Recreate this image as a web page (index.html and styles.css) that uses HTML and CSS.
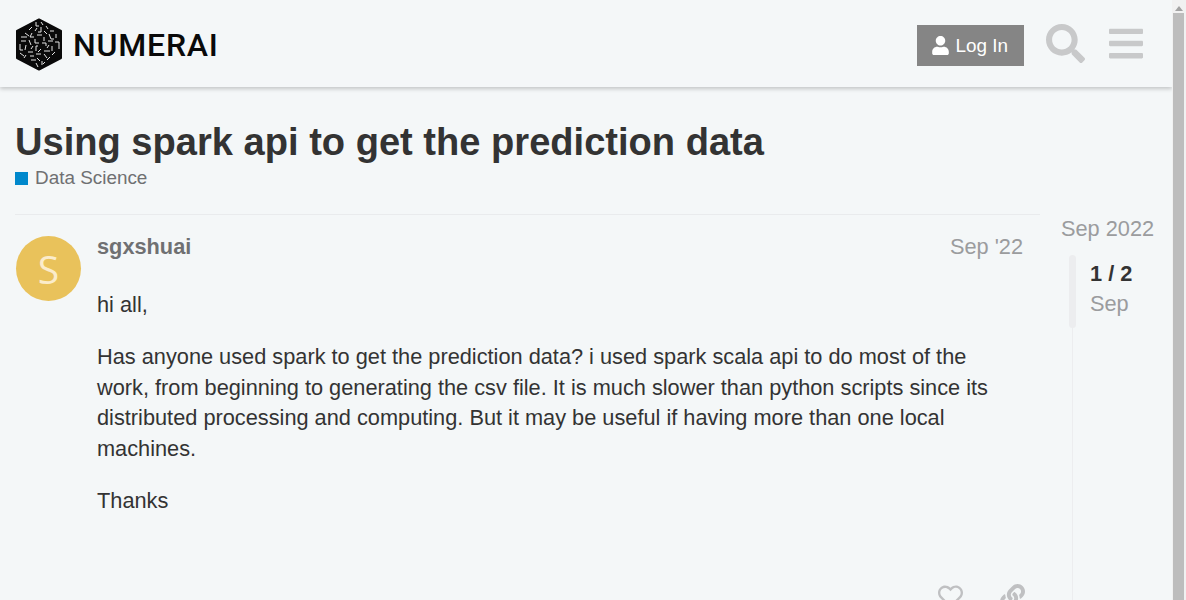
FILE: index.html
```html
<!DOCTYPE html>
<html lang="en">
<head>
    <meta charset="UTF-8">
    <meta name="viewport" content="width=device-width, initial-scale=1.0">
    <title>Using spark api to get the prediction data</title>
    <link rel="stylesheet" href="styles.css">
</head>
<body>
    <div class="page">
        <div class="main">
            <header class="site-header">
                <a class="logo" href="#">
                    <svg class="logo-mark" viewBox="0 0 48 54" width="48" height="54">
                        <polygon points="24,2.500 46,14 46,41 24,52.500 2,41 2,14" fill="#0a0a0a" stroke="#0a0a0a" stroke-linejoin="round" stroke-width="2"/>
                        <path class="logo-bits" d="M21 5v4h3M26 5l2 3M31 9l2 3M17 10l-3 3M22 11l-2 3M26 10v5h-3M35 14h4M29 14l3 3M10 16l4 3M17 16l-2 4h4M22 18h5M34 17l2 5h3M41 17v4M6 20h6M29 20v4M6 24h5M14 23l2 5M20 22v4h4M33 24h5M27 26h4v3M40 25h4v7M5 27v6h3M11 28l-1 5M18 29l-2 3M23 29h-2v5M34 28l-2 3M37 29v5M13 35h5M26 32l-3 3M29 34h6M5 36l4 3M40 35l-3 3M21 37h5M11 38l-2 3M15 39h4M29 37l3 4M35 40l-3 3M22 41l3 3M16 43h5M27 44v4M21 46l2 4M30 45l-2 2"/>
                    </svg>
                    <span class="logo-name">NUMERAI</span>
                </a>
                <div class="header-actions">
                    <button class="login-btn">
                        <svg class="user-icon" viewBox="0 0 448 512"><path d="M224 256c70.7 0 128-57.3 128-128S294.7 0 224 0 96 57.3 96 128s57.3 128 128 128zm89.6 32h-16.7c-22.2 10.2-46.9 16-72.9 16s-50.6-5.8-72.9-16h-16.7C60.2 288 0 348.2 0 422.4V464c0 26.5 21.5 48 48 48h352c26.5 0 48-21.5 48-48v-41.6c0-74.2-60.2-134.4-134.4-134.4z"/></svg>
                        Log In
                    </button>
                    <svg class="header-icon search-icon" viewBox="0 0 512 512"><path d="M505 442.7L405.3 343c-4.5-4.5-10.6-7-17-7H372c27.6-35.3 44-79.7 44-128C416 93.1 322.9 0 208 0S0 93.1 0 208s93.1 208 208 208c48.3 0 92.7-16.4 128-44v16.3c0 6.4 2.5 12.5 7 17l99.7 99.7c9.4 9.4 24.6 9.4 33.9 0l28.3-28.3c9.4-9.4 9.4-24.6.1-34zM208 336c-70.7 0-128-57.2-128-128 0-70.7 57.2-128 128-128 70.7 0 128 57.2 128 128 0 70.7-57.2 128-128 128z"/></svg>
                    <svg class="header-icon bars-icon" viewBox="0 0 448 512"><path d="M16 132h416c8.837 0 16-7.163 16-16V76c0-8.837-7.163-16-16-16H16C7.163 60 0 67.163 0 76v40c0 8.837 7.163 16 16 16zm0 160h416c8.837 0 16-7.163 16-16v-40c0-8.837-7.163-16-16-16H16c-8.837 0-16 7.163-16 16v40c0 8.837 7.163 16 16 16zm0 160h416c8.837 0 16-7.163 16-16v-40c0-8.837-7.163-16-16-16H16c-8.837 0-16 7.163-16 16v40c0 8.837 7.163 16 16 16z"/></svg>
                </div>
            </header>

            <div class="topic-title">
                <h1>Using spark api to get the prediction data</h1>
                <div class="category"><span class="category-box"></span>Data Science</div>
            </div>

            <div class="topic-body">
                <article class="post">
                    <div class="avatar">S</div>
                    <div class="post-main">
                        <div class="post-meta">
                            <span class="username">sgxshuai</span>
                            <span class="post-date">Sep '22</span>
                        </div>
                        <div class="cooked">
                            <p>hi all,</p>
                            <p>Has anyone used spark to get the prediction data? i used spark scala api to do most of the work, from beginning to generating the csv file. It is much slower than python scripts since its distributed processing and computing. But it may be useful if having more than one local machines.</p>
                            <p>Thanks</p>
                        </div>
                        <div class="post-actions">
                            <svg class="action-icon" viewBox="0 0 512 512"><path d="M458.4 64.3C400.6 15.7 311.3 23 256 79.3 200.7 23 111.4 15.6 53.6 64.3-21.6 127.6-10.6 230.8 43 285.5l175.4 178.7c10 10.2 23.4 15.9 37.6 15.9 14.3 0 27.6-5.6 37.6-15.8L469 285.6c53.5-54.7 64.7-157.9-10.6-221.3zm-23.6 187.5L259.4 430.5c-2.4 2.4-4.4 2.4-6.8 0L77.2 251.8c-36.5-37.2-43.9-107.6 7.3-150.7 38.9-32.7 98.9-27.8 136.5 10.5l35 35.7 35-35.7c37.8-38.5 97.8-43.2 136.5-10.6 51.1 43.1 43.5 113.9 7.3 150.8z"/></svg>
                            <svg class="action-icon" viewBox="0 0 512 512"><path d="M326.612 185.391c59.747 59.809 58.927 155.698.36 214.59-.11.12-.24.25-.36.37l-67.2 67.2c-59.27 59.27-155.699 59.262-214.96 0-59.27-59.26-59.27-155.7 0-214.96l37.106-37.106c9.84-9.84 26.786-3.3 27.294 10.606.648 17.722 3.826 35.527 9.69 52.721 1.986 5.822.567 12.262-3.783 16.612l-13.087 13.087c-28.026 28.026-28.905 73.66-1.155 101.96 28.024 28.579 74.086 28.749 102.325.51l67.2-67.19c28.191-28.191 28.073-73.757 0-101.83-3.701-3.694-7.429-6.564-10.341-8.569a16.037 16.037 0 0 1-6.947-12.606c-.396-10.567 3.348-21.456 11.698-29.806l21.054-21.055c5.521-5.521 14.182-6.199 20.584-1.731a152.482 152.482 0 0 1 20.522 17.197zM467.547 44.449c-59.261-59.262-155.69-59.27-214.96 0l-67.2 67.2c-.12.12-.25.25-.36.37-58.566 58.892-59.387 154.781.36 214.59a152.454 152.454 0 0 0 20.521 17.196c6.402 4.468 15.064 3.789 20.584-1.731l21.054-21.055c8.35-8.35 12.094-19.239 11.698-29.806a16.037 16.037 0 0 0-6.947-12.606c-2.912-2.005-6.64-4.875-10.341-8.569-28.073-28.073-28.191-73.639 0-101.83l67.2-67.19c28.239-28.239 74.3-28.069 102.325.51 27.75 28.3 26.872 73.934-1.155 101.96l-13.087 13.087c-4.35 4.35-5.769 10.79-3.783 16.612 5.864 17.194 9.042 34.999 9.69 52.721.509 13.906 17.454 20.446 27.294 10.606l37.106-37.106c59.271-59.259 59.271-155.699.001-214.959z"/></svg>
                        </div>
                    </div>
                </article>

                <aside class="timeline">
                    <div class="timeline-start">Sep 2022</div>
                    <div class="timeline-rail">
                        <div class="timeline-handle"></div>
                        <div class="timeline-info">
                            <div class="timeline-count">1 / 2</div>
                            <div class="timeline-date">Sep</div>
                        </div>
                    </div>
                </aside>
            </div>
        </div>

        <div class="scrollbar">
            <div class="scroll-arrow"></div>
            <div class="scroll-thumb"></div>
        </div>
    </div>
</body>
</html>
```

FILE: styles.css
```css
html, body {
    margin: 0;
    height: 600px;
    overflow: hidden;
}
body {
    background-color: #f4f7f8;
    color: #333;
    font-family: "Liberation Sans", Arial, sans-serif;
}
.page {
    display: flex;
    height: 600px;
}
.main {
    width: 1172px;
    flex: none;
    overflow: hidden;
}

/* header */
.site-header {
    display: flex;
    justify-content: space-between;
    align-items: center;
    height: 87px;
    padding: 0 29px 0 15px;
    box-sizing: border-box;
    box-shadow: 0 2px 4px rgba(0, 0, 0, 0.2);
}
.logo {
    display: flex;
    align-items: center;
    gap: 10px;
    text-decoration: none;
    color: #0a0a0a;
}
.logo-mark {
    display: block;
}
.logo-bits {
    fill: none;
    stroke: #e4e4e4;
    stroke-width: 1;
}
.logo-name {
    margin-top: 2px;
    font-family: Roboto, sans-serif;
    font-weight: 500;
    font-size: 32px;
    letter-spacing: 0.8px;
}
.header-actions {
    display: flex;
    align-items: center;
}
.login-btn {
    display: flex;
    align-items: center;
    gap: 6px;
    height: 41px;
    margin-top: 4px;
    padding: 0 16px 0 15.5px;
    border: 0;
    background-color: #858585;
    color: #fff;
    font-family: inherit;
    font-size: 18.9px;
}
.user-icon {
    width: 17px;
    height: 19px;
    fill: #fff;
}
.header-icon {
    fill: #c8c9ca;
}
.search-icon {
    width: 39px;
    height: 39px;
    margin-left: 22px;
}
.bars-icon {
    width: 34px;
    height: 39px;
    margin-left: 24px;
}

/* title */
.topic-title {
    padding: 33px 0 0 15px;
    height: 94px;
    box-sizing: border-box;
}
h1 {
    margin: 0;
    font-size: 38.08px;
    line-height: 44px;
    font-weight: 700;
}
.category {
    display: flex;
    align-items: center;
    gap: 7px;
    margin-top: 1px;
    font-size: 18.9px;
    line-height: 26px;
    color: #6f7072;
}
.category-box {
    width: 13px;
    height: 13px;
    background-color: #0088cc;
}

/* post */
.topic-body {
    display: flex;
    padding: 33px 0 0 15px;
}
.post {
    display: flex;
    width: 1025px;
    flex: none;
    box-sizing: border-box;
    height: 400px;
    padding: 21px 16px 0 1px;
    border-top: 1px solid #e9ebed;
}
.avatar {
    width: 65px;
    height: 65px;
    flex: none;
    border-radius: 50%;
    background-color: #e9c25b;
    color: #fbeccb;
    font-family: "Open Sans", sans-serif;
    font-size: 39px;
    line-height: 65px;
    text-align: center;
}
.post-main {
    flex: 1;
    margin-left: 16px;
}
.post-meta {
    display: flex;
    justify-content: space-between;
    font-size: 21.76px;
    line-height: 22px;
}
.username {
    font-weight: 700;
    color: #6f7072;
}
.post-date {
    margin-right: 1px;
    color: #9b9c9e;
}
.cooked {
    margin-top: 31.7px;
    font-size: 21.76px;
    line-height: 30.46px;
}
.cooked p {
    margin: 0 0 22px;
}
.post-actions {
    display: flex;
    justify-content: flex-end;
    gap: 37px;
    margin: 67.5px -1px 0 0;
}
.action-icon {
    width: 25px;
    height: 25px;
    fill: #bfc0c2;
}

/* timeline */
.timeline {
    margin-left: 21px;
    width: 110px;
}
.timeline-start {
    margin-top: 2px;
    font-size: 21.76px;
    line-height: 26px;
    color: #9b9c9e;
    white-space: nowrap;
}
.timeline-rail {
    display: flex;
    margin: 13px 0 0 8px;
    height: 400px;
    background: linear-gradient(#ecedef, #ecedef) 3px 0 / 1px 100% no-repeat;
}
.timeline-handle {
    width: 7px;
    height: 73px;
    border-radius: 4px;
    background-color: #ecedef;
}
.timeline-info {
    margin-left: 14px;
    padding-top: 4px;
    font-size: 21.76px;
    line-height: 30px;
}
.timeline-count {
    font-weight: 700;
}
.timeline-date {
    color: #9b9c9e;
}

/* drawn scrollbar */
.scrollbar {
    width: 14px;
    flex: none;
    background-color: #f1f1f1;
    padding: 0 2px 0 1px;
    box-sizing: border-box;
}
.scroll-arrow {
    width: 0;
    height: 0;
    margin: 6px auto 2px;
    border-left: 4px solid transparent;
    border-right: 4px solid transparent;
    border-bottom: 5px solid #a3a3a3;
}
.scroll-thumb {
    height: 600px;
    background-color: #bdbdbd;
}
```
